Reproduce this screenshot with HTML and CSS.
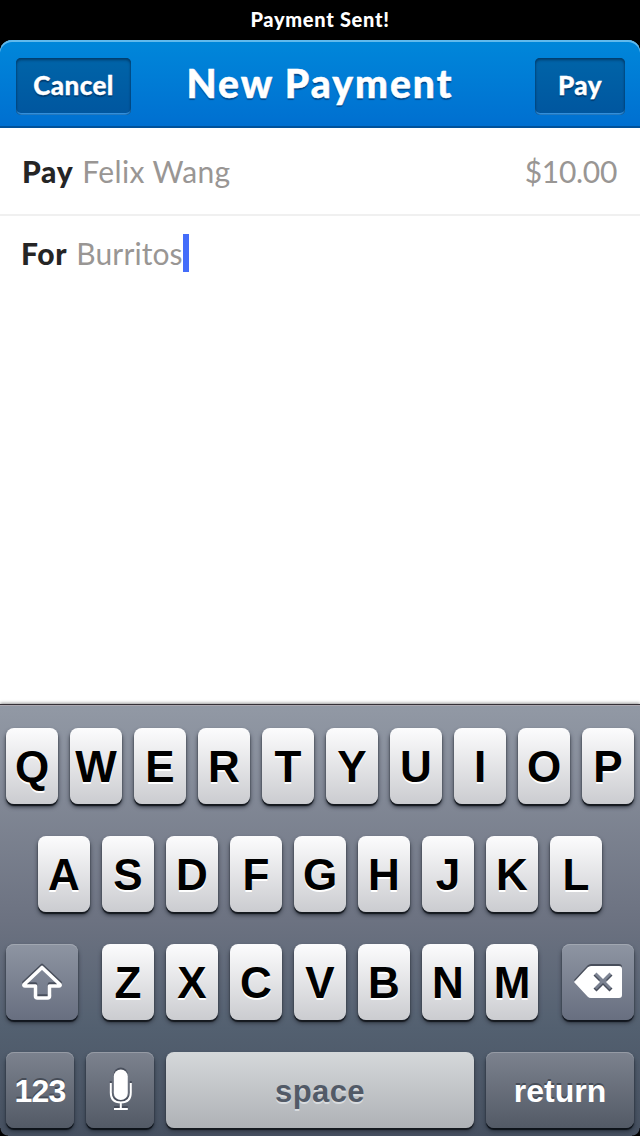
FILE: index.html
```
<!DOCTYPE html>
<html lang="en">
<head>
<meta charset="utf-8">
<title>New Payment</title>
<link rel="stylesheet" href="styles.css">
</head>
<body>
<div class="status"><span>Payment Sent!</span></div>
<header class="navbar">
  <button class="nav-button cancel"><span>Cancel</span></button>
  <h1><span>New Payment</span></h1>
  <button class="nav-button pay"><span>Pay</span></button>
</header>
<main>
  <div class="field recipient">
    <b>Pay</b><span class="name">Felix Wang</span><span class="amount">$10.00</span>
  </div>
  <div class="field note">
    <b>For</b><span class="reason">Burritos</span><i class="caret"></i>
  </div>
</main>
<section class="keyboard">
  <div class="row">
    <div class="key">Q</div><div class="key">W</div><div class="key">E</div><div class="key">R</div><div class="key">T</div><div class="key">Y</div><div class="key">U</div><div class="key">I</div><div class="key">O</div><div class="key">P</div>
  </div>
  <div class="row">
    <div class="key">A</div><div class="key">S</div><div class="key">D</div><div class="key">F</div><div class="key">G</div><div class="key">H</div><div class="key">J</div><div class="key">K</div><div class="key">L</div>
  </div>
  <div class="row third">
    <div class="key special wide">
      <svg class="icon" width="72" height="76" viewBox="0 0 72 76"><path d="M36 23.500 L54 40.500 Q54.500 42 53 42 H43.500 V52 Q43.500 54 41.500 54 H31.500 Q29.500 54 29.500 52 V42 H19 Q17.500 42 18 40.500 Z" fill="none" stroke="#fff" stroke-width="3.600" stroke-linejoin="round"/></svg>
    </div>
    <div class="letters"><div class="key">Z</div><div class="key">X</div><div class="key">C</div><div class="key">V</div><div class="key">B</div><div class="key">N</div><div class="key">M</div></div>
    <div class="key special wide">
      <svg class="icon" width="72" height="76" viewBox="0 0 72 76"><path fill="#fff" fill-rule="evenodd" d="M12 38 L25.500 23.500 Q27 22 29 22 H57 Q60 22 60 25 V51 Q60 54 57 54 H29 Q27 54 25.500 52.500 Z M34.500 28.500 L31.500 31.500 L38 38 L31.500 44.500 L34.500 47.500 L41 41 L47.500 47.500 L50.500 44.500 L44 38 L50.500 31.500 L47.500 28.500 L41 35 Z"/></svg>
    </div>
  </div>
  <div class="row">
    <div class="key special dark small"><span class="numbers">123</span></div>
    <div class="key special dark small">
      <svg class="icon" width="68" height="76" viewBox="0 0 68 76"><rect x="27.800" y="17.500" width="14" height="30.500" rx="7" fill="#fff"/><path d="M24.800 31 V40.500 Q24.800 50.500 34.800 50.500 Q44.800 50.500 44.800 40.500 V31 M34.800 50 V57 M28 57 H41.800" fill="none" stroke="#fff" stroke-width="2"/></svg>
    </div>
    <div class="key space"><span>space</span></div>
    <div class="key special dark return"><span>return</span></div>
  </div>
</section>
</body>
</html>
```
FILE: styles.css
```
* { box-sizing: border-box; }
body {
  margin: 0;
  width: 640px;
  height: 1136px;
  display: flex;
  flex-direction: column;
  overflow: hidden;
  background: #fff;
  font-family: Lato, "Open Sans", sans-serif;
}
.status {
  height: 40px;
  background: #000;
  color: #fff;
  text-align: center;
  font-size: 20px;
  font-weight: 900;
  line-height: 39px;
  letter-spacing: .7px;
}
.navbar {
  height: 88px;
  flex: none;
  display: grid;
  grid-template-columns: 115px 1fr 90px;
  align-items: start;
  padding: 18px 15px 0 16px;
  border-radius: 12px 12px 0 0;
  background: linear-gradient(#0087da, #006fd0);
  box-shadow: inset 0 2px #61b9ec, inset 0 -2px #00529b, 0 -12px 0 12px #000;
  clip-path: inset(0);
  color: #fff;
}
.navbar h1 {
  margin: 0;
  padding-right: 26px;
  text-align: center;
  white-space: nowrap;
  font-size: 39px;
  font-weight: 900;
  line-height: 50px;
  letter-spacing: 2.05px;
  -webkit-text-stroke: .5px #fff;
  text-shadow: 0 2px 1px #00498c;
}
.nav-button {
  height: 57px;
  padding: 0;
  border: 0;
  border-radius: 5px;
  background: linear-gradient(#0064a8, #00569f);
  box-shadow: inset 0 2px 3px #003c6b, inset 0 0 2px #003c6b, inset 0 -2px #3594e2;
  color: #fff;
  font: 900 26px/52px Lato, sans-serif;
  letter-spacing: .4px;
  -webkit-text-stroke: .3px #fff;
  text-shadow: 0 2px 1px #003c70;
}
.nav-button span { display: block; height: 55px; }
main { height: 576px; flex: none; }
.field {
  display: flex;
  align-items: center;
  padding: 0 23px 0 22px;
  color: #999694;
  font-size: 30px;
  line-height: 40px;
}
.field b { color: #252525; font-weight: 900; letter-spacing: .7px; }
.recipient { height: 88px; border-bottom: 2px solid #f0f0f0; }
.name { margin-left: 9px; letter-spacing: .35px; }
.amount { margin-left: auto; letter-spacing: -.3px; }
.note { height: 74px; padding-left: 21px; }
.reason { margin-left: 9px; letter-spacing: .1px; }
.caret { width: 6px; height: 38px; background: #446dfa; }
.keyboard {
  height: 432px;
  flex: none;
  display: flex;
  flex-direction: column;
  gap: 32px;
  padding: 24px 6px 8px;
  background:
    radial-gradient(circle at 100% 0, transparent 7px, #000 8px) 0 100% / 8px 8px no-repeat,
    linear-gradient(#9299a5, #737986 50%, #4e5967 78%, #465160);
  background:
    radial-gradient(circle at 100% 0, transparent 7px, #000 8px) 0 100% / 8px 8px no-repeat,
    radial-gradient(circle at 0 0, transparent 7px, #000 8px) 100% 100% / 8px 8px no-repeat,
    linear-gradient(#9299a5, #6c7281 50%, #536070 75%, #465060);
  box-shadow: inset 0 1px #353037, inset 0 2px #aaa7af, 0 -1px 3px #999;
  font-family: "Liberation Sans", Arial, sans-serif;
}
.row { display: flex; justify-content: center; gap: 12px; }
.third { justify-content: space-between; }
.letters { display: flex; gap: 12px; }
.key {
  width: 52px;
  height: 76px;
  border-radius: 8px;
  background: linear-gradient(#fcfcfd, #cbccd0);
  box-shadow: 0 2px 1px #15191f, 0 3px 4px #303641;
  color: #000;
  text-align: center;
  font-size: 44px;
  font-weight: 700;
  line-height: 78px;
  text-shadow: 0 2px #fff;
}
.special {
  background: linear-gradient(#8e95a2, #686f80);
  box-shadow: inset 0 1px #a1a7b1, 0 2px 1px #11161e, 0 3px 4px #303641;
  color: #fff;
  font-size: 32px;
  line-height: 78px;
  text-shadow: 0 -2px #464c57;
}
.dark {
  background: linear-gradient(#7c828e, #535a66);
  box-shadow: inset 0 1px #969ba5, 0 2px 1px #0d1219, 0 3px 4px #262f3b;
}
.icon { display: block; filter: drop-shadow(0 -2px 0 #484e5b); }
.wide { width: 72px; }
.small { width: 68px; }
.numbers { letter-spacing: -.8px; }
.space {
  width: 308px;
  background: linear-gradient(#d5d8da, #afb2b6);
  color: #525a67;
  font-size: 31px;
  line-height: 79px;
  letter-spacing: .4px;
  text-shadow: 0 2px #d9dcdf;
}
.return { width: 148px; }
```
